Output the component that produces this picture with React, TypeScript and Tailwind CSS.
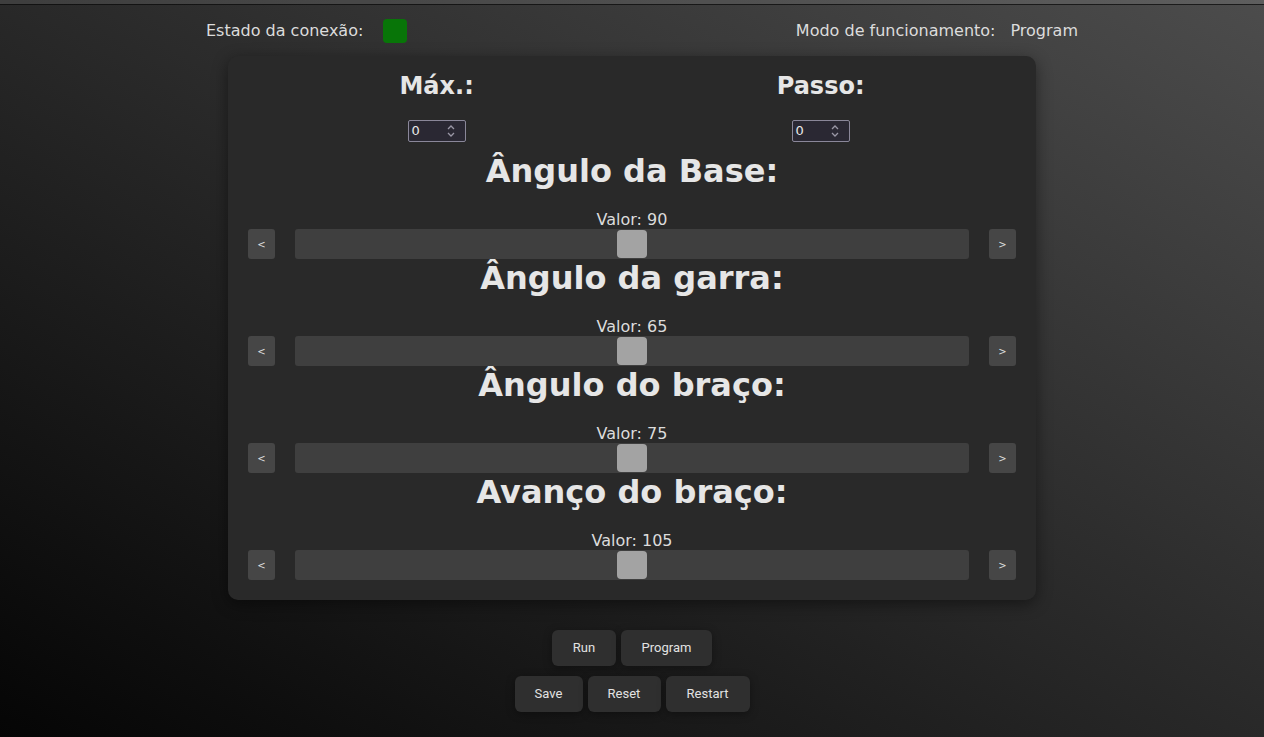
import { useState } from 'react';

const SLIDERS = [
  { title: 'Ângulo da Base:', value: 90 },
  { title: 'Ângulo da garra:', value: 65 },
  { title: 'Ângulo do braço:', value: 75 },
  { title: 'Avanço do braço:', value: 105 },
];

function NumberBox({ value }: { value: number }) {
  return (
    <div className="mt-[20px] flex h-[22px] w-[58px] items-center justify-between rounded-[2px] border border-[#8a8799] bg-[#2a2833] pl-[3px] pr-[9px] text-[13px] text-[#e8e8e8]">
      <span>{value}</span>
      <svg width="10" height="14" viewBox="0 0 10 14" fill="none" stroke="#9a97a6" strokeWidth="1.3">
        <path d="M2 5 L5 2 L8 5" />
        <path d="M2 9 L5 12 L8 9" />
      </svg>
    </div>
  );
}

function SliderRow({ title, value }: { title: string; value: number }) {
  return (
    <div className="flex flex-col items-center">
      <h2 className="mb-[20px] text-[32px] font-bold leading-[38px] text-[#e6e6e6]">{title}</h2>
      <div className="text-[16px] leading-[19px] text-[#dcdcdc]">Valor: {value}</div>
      <div className="flex h-[30px] w-full items-center gap-5">
        <button className="flex h-[30px] w-[27px] items-center justify-center rounded-[3px] bg-[#464646] text-[10px] text-[#dddddd]">&lt;</button>
        <div className="flex h-[30px] flex-1 items-center justify-center rounded-[3px] bg-[#3f3f3f]">
          <div className="h-[28px] w-[30px] rounded-[4px] bg-[#a3a3a3]" />
        </div>
        <button className="flex h-[30px] w-[27px] items-center justify-center rounded-[3px] bg-[#464646] text-[10px] text-[#dddddd]">&gt;</button>
      </div>
    </div>
  );
}

function ActionButton({ label, w }: { label: string; w: string }) {
  return (
    <button
      className={`h-[36px] ${w} rounded-[6px] bg-[#2f2f2f] text-[13px] text-[#e2e2e2] shadow-[0_2px_8px_rgba(0,0,0,0.35)]`}
      style={{ fontFamily: 'Roboto, sans-serif' }}
    >
      {label}
    </button>
  );
}

export default function App() {
  const [max] = useState(0);
  const [step] = useState(0);

  return (
    <div
      className="relative min-h-[737px] w-full bg-[linear-gradient(to_top_right,#050505,#4c4c4c)] text-[#dedede]"
      style={{ fontFamily: '"DejaVu Sans", sans-serif' }}
    >
      <div className="h-[5px] w-full border-b border-black/70 bg-white/10" />

      {/* Header */}
      <div className="flex h-[50px] items-center justify-between pl-[206px] pr-[186px] pt-[2px] text-[16px] text-[#dcdcdc]">
        <div className="flex items-center gap-5">
          <span>Estado da conexão:</span>
          <div className="h-[24px] w-[24px] rounded-[4px] bg-[#087508]" />
        </div>
        <div className="flex items-center gap-[15px]">
          <span>Modo de funcionamento:</span>
          <span>Program</span>
        </div>
      </div>

      {/* Panel */}
      <div className="mx-auto mt-[1px] w-[808px] rounded-[10px] bg-[#292929] px-5 pb-5 pt-4 shadow-[0_4px_16px_rgba(0,0,0,0.45)]">
        <div className="flex justify-around">
          <div className="flex flex-col items-center">
            <h3 className="text-[24px] font-bold leading-[28px] text-[#e6e6e6]">Máx.:</h3>
            <NumberBox value={max} />
          </div>
          <div className="flex flex-col items-center">
            <h3 className="text-[24px] font-bold leading-[28px] text-[#e6e6e6]">Passo:</h3>
            <NumberBox value={step} />
          </div>
        </div>
        <div className="mt-[10px] flex flex-col">
          {SLIDERS.map((s) => (
            <SliderRow key={s.title} title={s.title} value={s.value} />
          ))}
        </div>
      </div>

      {/* Actions */}
      <div className="mt-[30px] flex flex-col items-center gap-[10px]">
        <div className="flex gap-[5px]">
          <ActionButton label="Run" w="w-[64px]" />
          <ActionButton label="Program" w="w-[91px]" />
        </div>
        <div className="flex gap-[5px]">
          <ActionButton label="Save" w="w-[68px]" />
          <ActionButton label="Reset" w="w-[73px]" />
          <ActionButton label="Restart" w="w-[84px]" />
        </div>
      </div>
    </div>
  );
}
